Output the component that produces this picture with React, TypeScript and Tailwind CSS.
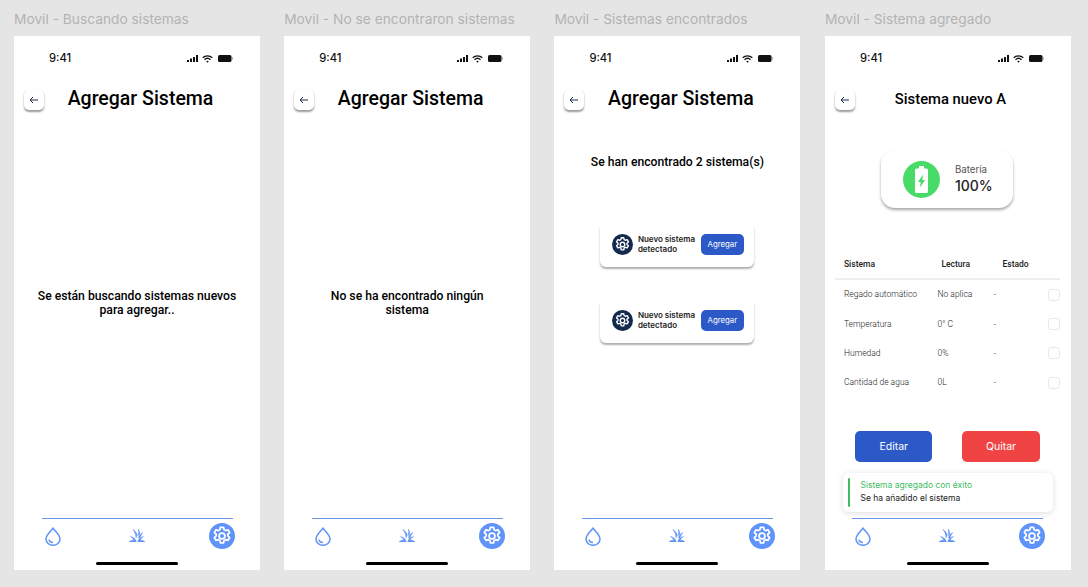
import React from "react";

const inter = "font-['Inter',sans-serif]";
const roboto = "font-['Roboto',sans-serif]";

function Gear({ size = 20, color = "white" }: { size?: number; color?: string }) {
  return (
    <svg width={size} height={size} viewBox="0 0 24 24" fill="none" stroke={color} strokeWidth={1.9} strokeLinejoin="round">
      <path d="M10.2 2.5h3.6l.5 2.7c.6.2 1.2.5 1.7.9l2.6-.9 1.8 3.1-2.1 1.8c.1.6.1 1.2 0 1.8l2.1 1.8-1.8 3.1-2.6-.9c-.5.4-1.1.7-1.7.9l-.5 2.7h-3.6l-.5-2.7c-.6-.2-1.2-.5-1.7-.9l-2.6.9-1.8-3.1 2.1-1.8c-.1-.6-.1-1.2 0-1.8L3.6 8.3l1.8-3.1 2.6.9c.5-.4 1.1-.7 1.7-.9z" />
      <circle cx="12" cy="12" r="3.2" />
    </svg>
  );
}

function Drop() {
  return (
    <svg width="16" height="19" viewBox="0 0 16 19" fill="none" stroke="#5f93f5" strokeWidth="1.5">
      <path d="M8 1.2C6 4 1 8 1 12a7 6.3 0 0 0 14 0C15 8 10 4 8 1.2z" />
      <path d="M3.8 12.6c.6 2 2.2 3 4.2 3" />
    </svg>
  );
}

function Sprinkler() {
  return (
    <svg width="16" height="13" viewBox="0 0 16 13" fill="#5f93f5" stroke="#5f93f5" strokeWidth="0.5">
      <path d="M0 12.900h7.200C7 10.500 5.200 8.400 1.500 7.400c1.600 1.200 2.800 2.400 3.300 3.900C3.300 11.100 1.700 11.400 0 12.900z" />
      <path d="M16 12.900H8.800C9 10.500 10.800 8.400 14.500 7.400c-1.600 1.200-2.800 2.400-3.300 3.900 1.500-.2 3.100.1 4.800 1.600z" />
      <path d="M7 8.800C7 5.800 6 3 3.900.4c2.300 1.500 3.700 3.400 4.400 5.600z" />
      <path d="M9.400 6.600C9.600 4.200 9.800 2.200 9.500.2c.9 1.800 1.300 3.600 1.300 5z" />
      <path d="M9.400 8.900c.6-2.200 2-4 4.300-5.300-1.200 1.800-2.300 3.600-2.800 5.500z" />
    </svg>
  );
}

function StatusBar() {
  return (
    <div className="flex items-center justify-between pl-[35px] pr-[27px] pt-[15px] h-[30px]">
      <span className={`${inter} text-[11.200px] font-medium text-[#111]`}>9:41</span>
      <div className="flex items-center gap-[4px]">
        <svg width="11" height="7" viewBox="0 0 11 7" fill="#111">
          <rect x="0" y="5" width="2" height="2" />
          <rect x="3" y="3.500" width="2" height="3.500" />
          <rect x="6" y="2" width="2" height="5" />
          <rect x="9" y="0" width="2" height="7" />
        </svg>
        <svg width="11" height="8" viewBox="0 0 11 8" fill="none" stroke="#111" strokeWidth="1.3">
          <path d="M.7 2.800a7 7 0 0 1 9.600 0M2.500 4.700a4.400 4.400 0 0 1 6 0" />
          <path d="M4.200 6.200a2 2 0 0 1 2.600 0L5.500 7.800z" fill="#111" stroke="none" />
        </svg>
        <svg width="15" height="7" viewBox="0 0 15 7" className="ml-[1px]">
          <rect x="0" y="0" width="13.500" height="7" rx="1.600" fill="#111" />
          <rect x="14" y="2.300" width="1" height="2.400" fill="#aaa" />
        </svg>
      </div>
    </div>
  );
}

function Header({ title, small }: { title: string; small?: boolean }) {
  return (
    <div className="relative flex items-center justify-center h-[30px] mt-[18px] px-[8px]">
      <div className="absolute left-[10px] top-[6px] w-[20px] h-[20px] rounded-[5px] bg-white flex items-center justify-center shadow-[0_1.5px_2px_rgba(0,0,0,0.4)]">
        <svg width="10" height="8" viewBox="0 0 10 8" fill="none" stroke="#1c2a4a" strokeWidth="1">
          <path d="M9 4H1M4 1 1 4l3 3" />
        </svg>
      </div>
      <span className={`${roboto} ${small ? "text-[14.800px] pl-[5px]" : "text-[19.500px] pl-[7px]"} font-medium text-black`}>{title}</span>
    </div>
  );
}

function BottomNav() {
  return (
    <div className="mt-auto flex flex-col items-center">
      <div className="w-[191px] border-t border-[#6b97ea]" />
      <div className="w-[191px] flex items-center justify-between h-[34px] pl-[3px] pr-0 relative">
        <Drop />
        <div className="absolute left-[87px] top-[10px]"><Sprinkler /></div>
        <div className="w-[26px] h-[26px] rounded-full bg-[#5f93f9] flex items-center justify-center ml-auto mr-[-2px]">
          <Gear size={22} />
        </div>
      </div>
      <div className="w-[82px] h-[3px] rounded-full bg-black mt-[9px] mb-[5px]" />
    </div>
  );
}

function SystemCard() {
  return (
    <div className="w-[154px] h-[44px] rounded-[6px] bg-white shadow-[0_2px_2px_rgba(0,0,0,0.32)] flex items-center pl-[11.500px] pr-[10.500px]">
      <div className="w-[21px] h-[21px] rounded-full bg-[#132a4e] flex items-center justify-center shrink-0">
        <Gear size={17} />
      </div>
      <div className={`${inter} ml-[5px] text-[8px] leading-[9.500px] font-semibold text-[#222]`}>
        Nuevo sistema<br />detectado
      </div>
      <div className={`${inter} ml-auto w-[43px] h-[21px] rounded-[5px] bg-[#2b59c8] text-white text-[7.800px] flex items-center justify-center`}>
        Agregar
      </div>
    </div>
  );
}

const rows = [
  ["Regado automático", "No aplica"],
  ["Temperatura", "0° C"],
  ["Humedad", "0%"],
  ["Cantidad de agua", "0L"],
];

function Detail() {
  return (
    <div className="flex flex-col flex-1 min-h-0">
      <div className="self-center mt-[36px] mr-[2px] w-[132px] h-[58px] rounded-[14px] bg-white shadow-[0_2px_3px_rgba(0,0,0,0.35)] flex items-center pl-[22px]">
        <div className="w-[37px] h-[37px] rounded-full bg-[#49db68] flex items-center justify-center">
          <svg width="13" height="27" viewBox="0 0 13 27">
            <path d="M4 0h5v2.500h2.500A1.500 1.500 0 0 1 13 4V25.500A1.500 1.500 0 0 1 11.500 27h-10A1.500 1.500 0 0 1 0 25.500V4A1.500 1.500 0 0 1 1.500 2.500H4z" fill="white" />
            <path d="M8 8.500 3 16h2.700L5 21.500 10 14H7.300z" fill="#49db68" />
          </svg>
        </div>
        <div className="ml-[15px] pt-[1px]">
          <div className={`${inter} text-[9.700px] leading-[12px] text-[#555]`}>Batería</div>
          <div className={`${inter} text-[14px] leading-[18px] font-medium text-[#222] mt-[1px]`}>100%</div>
        </div>
      </div>
      <div className="pl-[10px] pr-[11px] mt-[49px]">
        <div className={`${roboto} flex items-center h-[14px] text-[8.500px] font-medium text-[#222] pl-[9px]`}>
          <span className="w-[97.500px]">Sistema</span>
          <span className="w-[61px]">Lectura</span>
          <span>Estado</span>
        </div>
        <div className="h-[2px] bg-[#eeeeee] mt-[7px]" />
        {rows.map(([a, b]) => (
          <div key={a} className={`${roboto} flex items-center h-[29.300px] text-[8.500px] font-light text-[#222] pl-[9px] first:mt-[1px]`}>
            <span className="w-[93.500px]">{a}</span>
            <span className="w-[56px]">{b}</span>
            <span className="flex-1">-</span>
            <span className="w-[12px] h-[12px] rounded-[3px] border border-[#e8e8ec] bg-white" />
          </div>
        ))}
      </div>
      <div className={`${inter} flex justify-between pl-[30px] pr-[31px] mt-[34px] text-[10.500px]`}>
        <div className="w-[77.500px] h-[31px] rounded-[5px] bg-[#2b59c8] text-white flex items-center justify-center">Editar</div>
        <div className="w-[78px] h-[31px] rounded-[5px] bg-[#f04343] text-white flex items-center justify-center">Quitar</div>
      </div>
    </div>
  );
}

function Phone({ label, title, small, children }: { label: string; title: string; small?: boolean; children?: React.ReactNode }) {
  return (
    <div className="w-[246px] flex flex-col shrink-0 last:ml-[0.400px]">
      <div className={`${inter} h-[36px] pt-[11px] text-[13.750px] leading-[16px] text-[#b3b3b3] whitespace-nowrap`}>{label}</div>
      <div className="relative h-[534px] bg-white flex flex-col">
        <StatusBar />
        <Header title={title} small={small} />
        {children}
        <BottomNav />
      </div>
    </div>
  );
}

const message = `${roboto} text-[12.200px] leading-[14px] font-medium text-black text-center`;

export default function App() {
  return (
    <div className="w-[1088px] h-[587px] overflow-hidden bg-[#e5e5e5] flex gap-[24.200px] pl-[14px]">
      <Phone label="Movil - Buscando sistemas" title="Agregar Sistema">
        <div className={`${message} mt-[175px] px-[20px]`}>Se están buscando sistemas nuevos<br />para agregar..</div>
      </Phone>
      <Phone label="Movil - No se encontraron sistemas" title="Agregar Sistema">
        <div className={`${message} mt-[175px] px-[20px]`}>No se ha encontrado ningún<br />sistema</div>
      </Phone>
      <Phone label="Movil - Sistemas encontrados" title="Agregar Sistema">
        <div className={`${message} mt-[41px]`}>Se han encontrado 2 sistema(s)</div>
        <div className="flex flex-col items-center gap-[32px] mt-[53.500px]">
          <SystemCard />
          <SystemCard />
        </div>
      </Phone>
      <Phone label="Movil - Sistema agregado" title="Sistema nuevo A" small>
        <Detail />
        <div className="absolute left-[18px] top-[437px] w-[210px] h-[39px] rounded-[6px] bg-white shadow-[0_1px_6px_rgba(0,0,0,0.14)] flex items-center pl-[5px]">
          <div className="w-[2.500px] h-[29px] bg-[#3fbc63] rounded-[1px]" />
          <div className={`${inter} ml-[10px] text-[8.500px] leading-[13px] mb-[1px]`}>
            <div className="text-[#3fbc63]">Sistema agregado con éxito</div>
            <div className="text-[#222]">Se ha añadido el sistema</div>
          </div>
        </div>
      </Phone>
    </div>
  );
}
